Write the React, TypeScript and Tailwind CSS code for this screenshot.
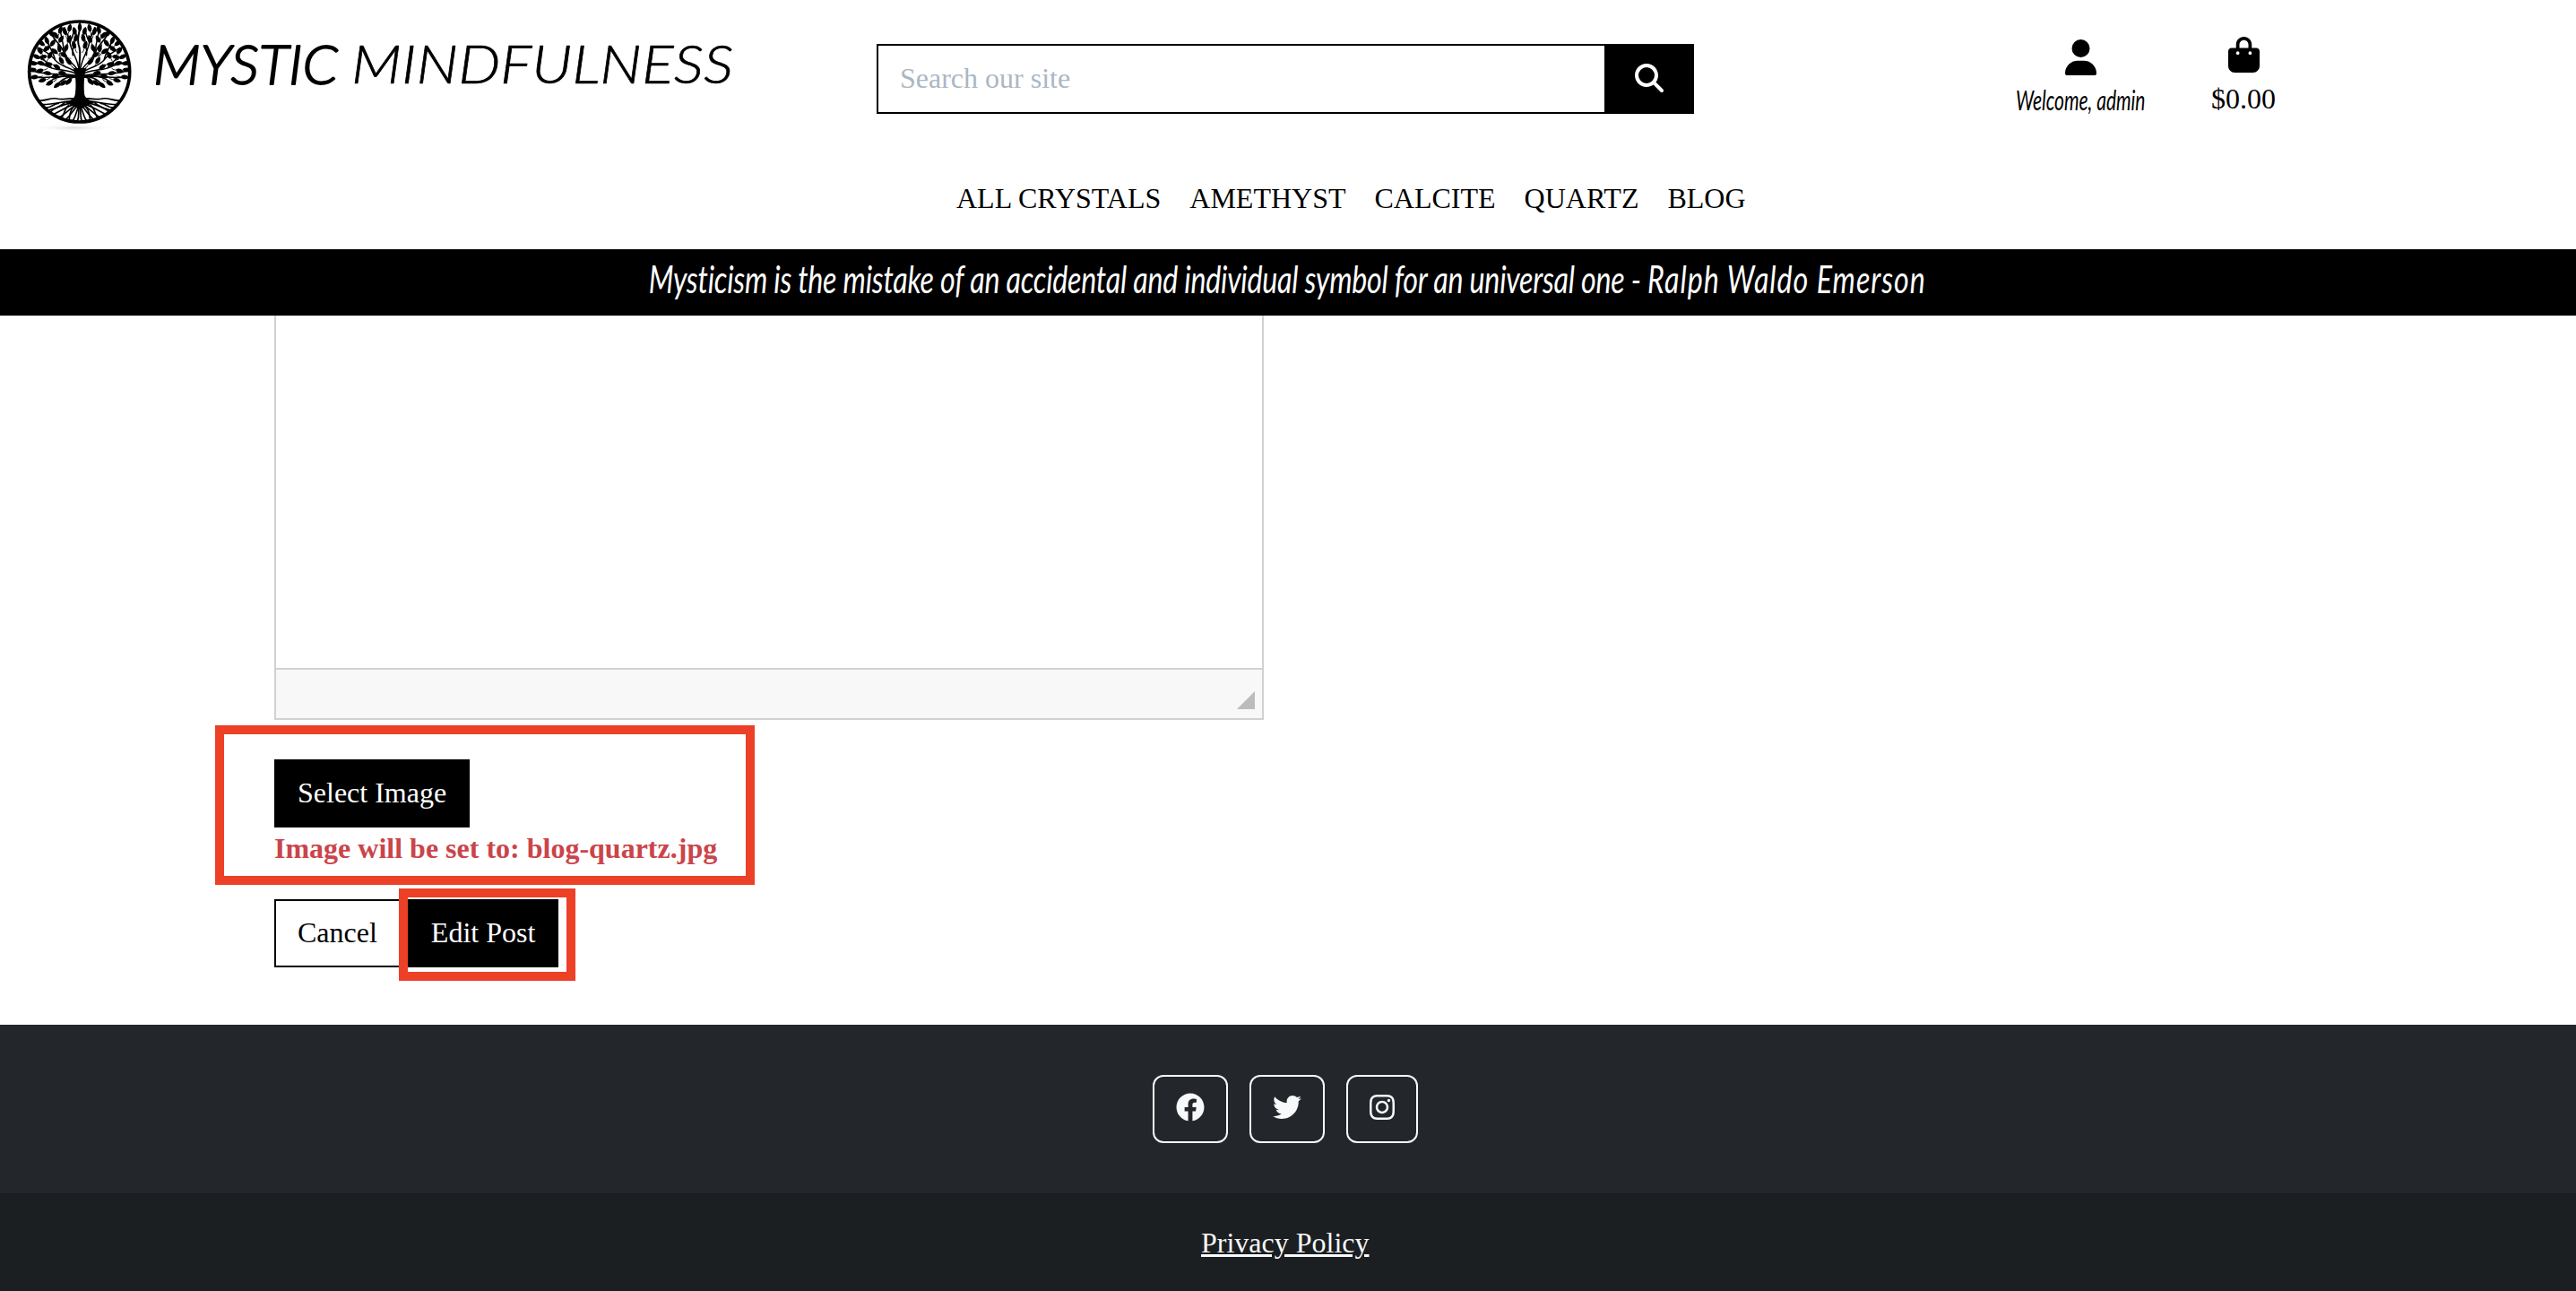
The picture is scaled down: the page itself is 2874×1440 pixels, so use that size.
import React from "react";
import { FaFacebook, FaTwitter, FaInstagram } from "react-icons/fa";
import { FaUser, FaBagShopping, FaMagnifyingGlass } from "react-icons/fa6";

type Leaf = [number, number, number];

// Leaves of the right half of the crown: x, y, rotation.
const leaves: Leaf[] = [
  [284, 105, 15], [301, 95, -12], [317, 106, 18], [332, 101, -18], [347, 119, 38],
  [330, 132, -30], [362, 112, 30], [377, 136, 20], [358, 145, -35], [394, 145, 50],
  [400, 170, 35], [379, 163, -50], [411, 190, 62], [388, 190, 100], [367, 186, -25],
  [421, 212, 82], [395, 212, 70], [370, 215, 85], [424, 234, 92], [400, 237, 105],
  [418, 258, 96], [391, 268, 105], [367, 278, 118], [341, 284, 125], [321, 277, 125],
  [303, 272, 135], [349, 255, 105], [374, 245, 80], [324, 245, 75], [343, 224, 60],
  [328, 203, 30], [350, 172, 50], [313, 162, -20], [303, 207, 35], [335, 163, 5],
  [303, 132, -20], [286, 152, 20], [280, 128, -10], [320, 184, 60],
];

const branches = [
  "M268 245C280 215 310 205 322 172C330 148 350 140 362 112",
  "M268 245C270 200 295 175 300 143C303 122 312 112 318 92",
  "M268 248C300 222 332 225 350 200C362 184 385 172 402 160",
  "M270 252C305 228 340 240 372 224C390 215 410 212 428 206",
  "M270 256C310 240 355 258 430 236",
  "M272 260C320 246 370 266 424 258",
  "M276 258C296 252 330 262 346 290",
  "M276 256C310 248 350 256 374 278",
  "M274 258C290 256 306 262 310 282",
  "M300 143C292 125 288 112 284 96",
  "M322 172C318 150 330 132 332 96",
  "M350 200C352 180 370 160 378 128",
  "M310 205C318 190 318 170 312 152",
  "M290 185C296 165 282 150 286 135",
  "M362 226C376 215 384 195 412 186",
];

const roots = [
  "M268 334C300 322 320 338 344 330C364 326 380 338 400 336",
  "M268 340C300 330 340 350 392 350",
  "M268 346C305 338 330 358 376 370",
  "M270 346C300 348 320 366 358 384",
  "M268 346C292 352 306 376 338 394",
  "M268 346C284 360 292 380 316 402",
  "M268 346C276 366 278 384 292 408",
  "M268 346C274 370 266 386 276 410",
  "M318 344C334 360 350 356 366 376",
  "M304 352C322 366 316 384 330 396",
  "M288 358C304 374 298 390 304 404",
  "M338 346C352 344 364 364 384 360",
];

function TreeHalf() {
  return (
    <g>
      <g fill="none" stroke="#000" strokeLinecap="round">
        {branches.map((d) => (
          <path key={d} d={d} strokeWidth="4.6" />
        ))}
        {roots.map((d) => (
          <path key={d} d={d} strokeWidth="5" />
        ))}
      </g>
      {leaves.map(([x, y, r]) => (
        <path
          key={`${x}-${y}`}
          transform={`translate(${x} ${y}) rotate(${r}) scale(1.12)`}
          d="M0 -14C9 -6 8 6 0 12C-8 6 -9 -6 0 -14ZM-1 10C0 15 1 19 -3 24L-1 24C3 19 2 15 1 10Z"
        />
      ))}
    </g>
  );
}

function TreeLogo() {
  return (
    <svg className="h-[130px] w-[122px] shrink-0" viewBox="85 60 366 390">
      <defs>
        <radialGradient id="ground">
          <stop offset="0" stopColor="#dcdcdc" />
          <stop offset="1" stopColor="#fff" stopOpacity="0" />
        </radialGradient>
        <clipPath id="disc">
          <circle cx="267" cy="240" r="170" />
        </clipPath>
      </defs>
      <ellipse cx="250" cy="428" rx="145" ry="12" fill="url(#ground)" />
      <g clipPath="url(#disc)">
        <TreeHalf />
        <g transform="translate(535 0) scale(-1 1)">
          <TreeHalf />
        </g>
        <path d="M268 245C262 205 276 180 264 150C258 125 268 110 268 90" fill="none" stroke="#000" strokeWidth="6" />
        <path d="M268 74C277 86 277 98 268 106C259 98 259 86 268 74Z" />
        <path d="M246 228H290C281 250 281 300 284 318C290 334 304 336 318 342L268 366L218 342C234 336 248 334 252 318C256 300 256 250 246 228Z" />
      </g>
      <circle cx="267" cy="240" r="168" fill="none" stroke="#000" strokeWidth="11" />
    </svg>
  );
}

function Brand() {
  return (
    <a className="flex w-[978px] items-start pl-[28px] pt-[20px]">
      <TreeLogo />
      <svg
        className="ml-[20px] mt-[10px] h-[90px] w-[660px]"
        viewBox="0 0 660 90"
        fontFamily="Lato"
        fontStyle="italic"
        fontWeight="300"
        stroke="#000"
        strokeLinejoin="round"
      >
        <text x="1" y="64" fontSize="61" strokeWidth="1.9" textLength="206" lengthAdjust="spacingAndGlyphs">MYSTIC</text>
        <text x="222" y="63" fontSize="60" strokeWidth="0.7" textLength="426" lengthAdjust="spacingAndGlyphs">MINDFULNESS</text>
      </svg>
    </a>
  );
}

const navItems = ["ALL CRYSTALS", "AMETHYST", "CALCITE", "QUARTZ", "BLOG"];

const socialButton = "flex h-[76px] items-start rounded-xl border-2 border-[#f8f9fa] px-[24px] pt-[18px] text-[32px]";

export default function App() {
  return (
    <div className="flex h-[1440px] w-[2874px] flex-col overflow-hidden bg-white font-['Liberation_Serif',serif] text-[32px] leading-[48px] text-black">
      <header className="h-[278px] shrink-0">
        <div className="flex h-[192px]">
          <Brand />
          <form className="mt-[49px] flex h-[78px] w-[912px]">
            <input
              className="w-[812px] border-2 border-r-0 border-black px-[24px] pb-[2px] placeholder:text-[#aab7c4]"
              placeholder="Search our site"
            />
            <button type="button" className="flex w-[100px] justify-center bg-black pt-[22px] text-white">
              <FaMagnifyingGlass />
            </button>
          </form>
          <div className="ml-[351px] flex">
            <div className="flex w-[161px] flex-col items-center pt-[44px]">
              <FaUser className="h-[40px] w-[35px]" />
              <span className="mt-[3px] origin-center scale-x-[0.70] whitespace-nowrap font-['Lato'] text-[30px] italic">
                Welcome, admin
              </span>
            </div>
            <div className="ml-[50px] flex w-[102px] flex-col items-center pt-[41px]">
              <FaBagShopping className="h-[40px] w-[35px]" />
              <span className="mt-[5px]">$0.00</span>
            </div>
          </div>
        </div>
        <nav className="flex gap-[32px] pl-[1067px] pt-[5px]">
          {navItems.map((item) => (
            <a key={item}>{item}</a>
          ))}
        </nav>
      </header>

      <div className="flex h-[74px] shrink-0 justify-center bg-black pr-[2px] pt-[9px] text-white">
        <p className="scale-x-[0.749] whitespace-nowrap font-['Lato'] text-[43px] italic">
          <span className="tracking-[-0.34px]">Mysticism is the mistake of an accidental and individual symbol for an universal one - </span>
          <span className="tracking-[1.3px]">Ralph Waldo Emerson</span>
        </p>
      </div>

      <main className="h-[791px] shrink-0 pl-[306px]">
        <div className="flex h-[451px] w-[1104px] flex-col border-2 border-t-0 border-[#d1d1d1]">
          <div className="grow" />
          <div className="flex h-[56px] items-end justify-end border-t-2 border-[#d1d1d1] bg-[#f8f8f8] pb-[10px] pr-[8px]">
            <div className="size-[20px] bg-[#bcbcbc] [clip-path:polygon(100%_0,100%_100%,0_100%)]" />
          </div>
        </div>

        <div className="relative mt-[44px] h-[124px]">
          <button className="h-[76px] border-2 border-black bg-black px-[24px] pb-[2px] text-white">Select Image</button>
          <p className="-mt-px font-bold text-[#cb444a]">Image will be set to: blog-quartz.jpg</p>
          <div className="absolute -left-[66px] -top-[38px] h-[178px] w-[602px] border-[10px] border-[#ec4027]" />
        </div>

        <div className="mt-[32px] flex gap-[8px]">
          <button className="h-[76px] border-2 border-black px-[24px] pb-[2px]">Cancel</button>
          <div className="relative">
            <button className="h-[76px] border-2 border-black bg-black px-[24px] pb-[2px] text-white">Edit Post</button>
            <div className="absolute -left-[10px] -top-[12px] h-[103px] w-[197px] border-[10px] border-[#ec4027]" />
          </div>
        </div>
      </main>

      <footer className="flex grow flex-col bg-[#23262a] text-[#f8f9fa]">
        <div className="flex h-[188px] gap-[24px] pl-[1286px] pt-[56px]">
          <a className={socialButton}><FaFacebook /></a>
          <a className={socialButton}><FaTwitter /></a>
          <a className={socialButton}><FaInstagram className="h-[32px] w-[28px]" /></a>
        </div>
        <div className="grow bg-[#1c1f21] pl-[1340px] pt-[31px]">
          <a className="underline decoration-[3px] underline-offset-[2px]">Privacy Policy</a>
        </div>
      </footer>
    </div>
  );
}
